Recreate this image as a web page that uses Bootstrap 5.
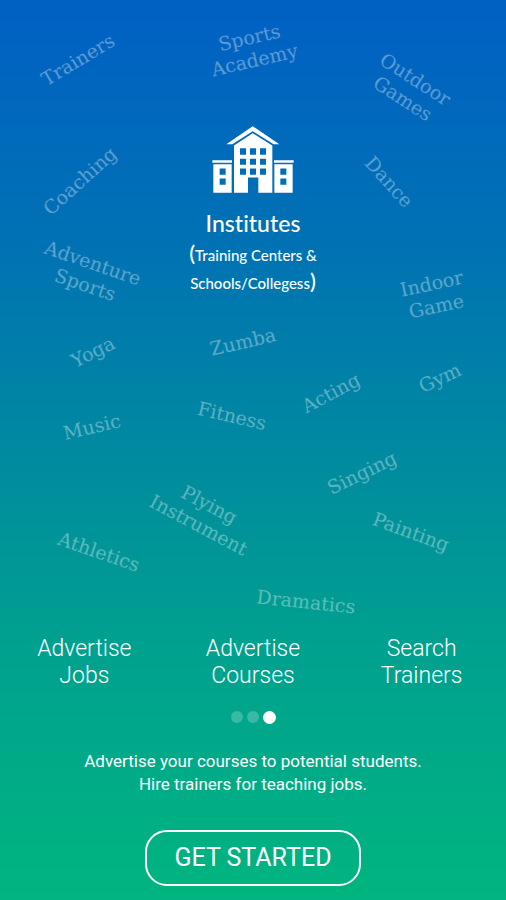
<!DOCTYPE html>
<html lang="en">
<head>
<meta charset="utf-8">
<meta name="viewport" content="width=device-width, initial-scale=1">
<title>Get started</title>
<link href="https://cdn.jsdelivr.net/npm/bootstrap@5.3.0/dist/css/bootstrap.min.css" rel="stylesheet">
<style>
body { font-family: Roboto, sans-serif; color: #fff; background: #00b481; }
.welcome { background: linear-gradient(#0060c4 0%, #0072b4 27%, #008c9f 52%, #00a18f 72%, #00b57f 100%); }
.canvas { min-height: 631px; padding-top: 126px; }
.topic { position: absolute; transform: translate(-50%, -50%) rotate(var(--tilt)); font: 19px/23px "DejaVu Serif", serif; color: rgba(255, 255, 255, .22); text-shadow: 0 0 1px rgba(255, 255, 255, .2); text-align: center; white-space: nowrap; }
.t-trainers { left: 15.5%; top: 60px; --tilt: -31deg; }
.t-academy { left: 49.8%; top: 49px; --tilt: -13deg; }
.t-outdoor { left: 80.8%; top: 89px; --tilt: 33deg; }
.t-coaching { left: 15.8%; top: 181px; --tilt: -42deg; }
.t-dance { left: 76.9%; top: 182px; --tilt: 48deg; }
.t-adventure { left: 17.5%; top: 274px; --tilt: 19deg; }
.t-indoor { left: 85.8%; top: 295px; --tilt: -12deg; }
.t-yoga { left: 18.4%; top: 352px; --tilt: -26deg; }
.t-zumba { left: 48%; top: 342px; --tilt: -13deg; }
.t-acting { left: 65.4%; top: 393px; --tilt: -28deg; }
.t-gym { left: 87%; top: 378px; --tilt: -25deg; }
.t-music { left: 18.2%; top: 427px; --tilt: -13deg; }
.t-fitness { left: 45.8%; top: 416px; --tilt: 13deg; }
.t-singing { left: 71.5%; top: 473px; --tilt: -26deg; }
.t-instrument { left: 40.3%; top: 515px; --tilt: 28deg; }
.t-painting { left: 81.2%; top: 532px; --tilt: 20deg; }
.t-athletics { left: 19.6%; top: 552px; --tilt: 19deg; }
.t-dramatics { left: 60.4%; top: 602px; --tilt: 6deg; }
.institute { font-family: Lato, sans-serif; font-weight: 500; font-variant-ligatures: none; }
.institute svg { width: 82px; height: 67px; }
.institute h1 { font-size: 23px; line-height: 28px; font-weight: 500; }
.institute p { font-size: 15px; line-height: 28px; }
.paren { font-size: 22px; line-height: 20px; }
.feature { font-size: 23px; line-height: 27px; font-weight: 300; }
.dots { height: 14px; gap: 4px; margin: 21px 0 26px; }
.dots button { width: 12px; height: 12px; background: rgba(255, 255, 255, .22); }
.dots .active { width: 13px; height: 13px; background: #fff; }
.blurb { font-size: 17px; line-height: 23px; }
.start-area { padding-bottom: 14px; }
.start { width: 216px; height: 56px; border: 2px solid #fff; border-radius: 22px; font-size: 25px; line-height: 32px; color: #fff; }
</style>
</head>
<body>
<main class="welcome min-vh-100 d-flex flex-column text-center overflow-hidden">
  <section class="canvas position-relative">
    <span class="topic t-trainers">Trainers</span>
    <span class="topic t-academy">Sports<br>Academy</span>
    <span class="topic t-outdoor">Outdoor<br>Games</span>
    <span class="topic t-coaching">Coaching</span>
    <span class="topic t-dance">Dance</span>
    <span class="topic t-adventure">Adventure<br>Sports</span>
    <span class="topic t-indoor">Indoor<br>Game</span>
    <span class="topic t-yoga">Yoga</span>
    <span class="topic t-zumba">Zumba</span>
    <span class="topic t-acting">Acting</span>
    <span class="topic t-gym">Gym</span>
    <span class="topic t-music">Music</span>
    <span class="topic t-fitness">Fitness</span>
    <span class="topic t-singing">Singing</span>
    <span class="topic t-instrument">Plying<br>Instrument</span>
    <span class="topic t-painting">Painting</span>
    <span class="topic t-athletics">Athletics</span>
    <span class="topic t-dramatics">Dramatics</span>
    <div class="institute">
      <svg viewBox="0 0 246 200" fill="#fff" aria-hidden="true">
        <path d="M122 0 202 54H185L122 15 61 54H43Z"/>
        <path fill-rule="evenodd" d="M66 58 122 21 181 58V200H139V154H108V200H66ZM84 66V86H102V66ZM114 66V86H132V66ZM144 66V86H162V66ZM84 98V116H102V98ZM114 98V116H132V98ZM144 98V116H162V98ZM84 127V146H102V127ZM114 127V146H132V127ZM144 127V146H162V127Z"/>
        <path d="M1 102H60V110H1ZM186 102H245V110H186Z"/>
        <path fill-rule="evenodd" d="M4 114H59V200H4ZM23 127V146H41V127ZM23 157V176H41V157ZM187 114H242V200H187ZM205 127V146H223V127ZM205 157V176H223V157Z"/>
      </svg>
      <h1 class="mt-3 mb-1">Institutes</h1>
      <p class="mb-0"><span class="paren">(</span>Training Centers &amp;<br>Schools/Collegess<span class="paren">)</span></p>
    </div>
  </section>
  <section class="row g-0 pt-1">
    <div class="col-4 feature">Advertise<br>Jobs</div>
    <div class="col-4 feature">Advertise<br>Courses</div>
    <div class="col-4 feature">Search<br>Trainers</div>
  </section>
  <div class="dots d-flex justify-content-center align-items-center">
    <button type="button" class="btn p-0 border-0 rounded-circle" aria-label="Slide 1"></button>
    <button type="button" class="btn p-0 border-0 rounded-circle" aria-label="Slide 2"></button>
    <button type="button" class="btn p-0 border-0 rounded-circle active" aria-label="Slide 3"></button>
  </div>
  <p class="blurb mb-0">Advertise your courses to potential students.<br>Hire trainers for teaching jobs.</p>
  <div class="start-area mt-auto">
    <button type="button" class="btn start p-0">GET STARTED</button>
  </div>
</main>
<script src="https://cdn.jsdelivr.net/npm/bootstrap@5.3.0/dist/js/bootstrap.bundle.min.js"></script>
</body>
</html>
